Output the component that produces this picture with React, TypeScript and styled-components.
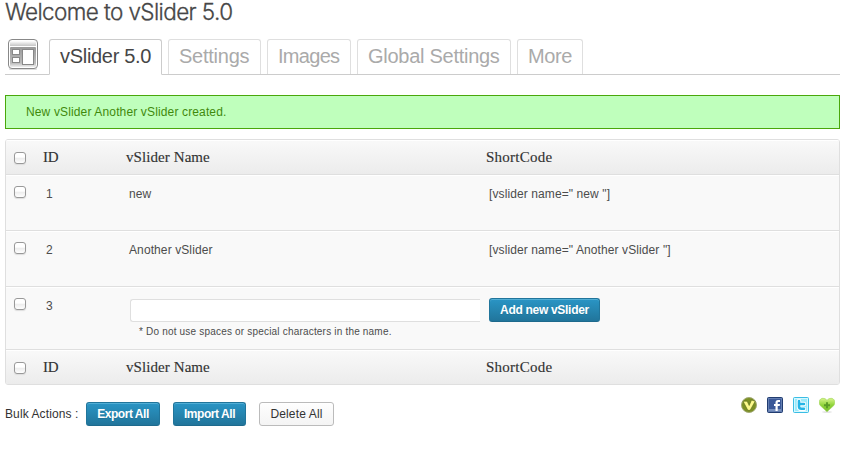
import React from "react";
import styled, { createGlobalStyle } from "styled-components";

const GlobalStyle = createGlobalStyle`
  * { box-sizing: border-box; }
  body {
    margin: 0;
    background: #fff;
    color: #333;
    font: 12px/16px "Liberation Sans", Arial, sans-serif;
  }
`;

const Page = styled.main`
  width: 835px;
  height: 450px;
  margin-left: 5px;
  overflow: hidden;
`;

const Title = styled.h1`
  margin: 0;
  height: 39px;
  font: 300 22.5px/23px Inter, "Liberation Sans", sans-serif;
  letter-spacing: -0.6px;
  color: #464646;
  -webkit-text-stroke: 0.3px #464646;
  white-space: nowrap;
`;

const TabBar = styled.nav`
  display: flex;
  height: 36px;
  border-bottom: 1px solid #ccc;
`;

const ScreenIcon = styled.svg`
  display: block;
  flex: none;
  width: 32px;
  height: 33px;
  margin: 0 10px 0 2px;
`;

const Tab = styled.a<{ $width: number; $active?: boolean; $spacing: number }>`
  flex: none;
  width: ${(p) => p.$width}px;
  height: ${(p) => (p.$active ? 36 : 35)}px;
  margin-right: 6px;
  padding-left: 10px;
  border: 1px solid ${(p) => (p.$active ? "#ccc" : "#dfdfdf")};
  border-bottom: ${(p) => (p.$active ? "1px solid #fff" : "0")};
  border-radius: 3px 3px 0 0;
  background: #fff;
  color: ${(p) => (p.$active ? "#464646" : "#aaa")};
  font-size: 20px;
  line-height: 33px;
  letter-spacing: ${(p) => p.$spacing}px;
  white-space: nowrap;
`;

const Notice = styled.div`
  height: 34px;
  margin: 20px 0 10px;
  padding-left: 20px;
  border: 1px solid #4aa70b;
  background: #bfffbc;
  color: #3f8a0c;
  line-height: 33px;
  letter-spacing: 0.14px;
`;

const Table = styled.section`
  height: 246px;
  border: 1px solid #dfdfdf;
  border-radius: 3px;
  background: #f9f9f9;
  overflow: hidden;
`;

const Columns = styled.div`
  display: grid;
  grid-template-columns: 37px 83px 360px 1fr;
`;

const HeadRow = styled(Columns)<{ $footer?: boolean }>`
  height: ${(p) => (p.$footer ? 34 : 35)}px;
  border-bottom: ${(p) => (p.$footer ? "0" : "1px solid #dfdfdf")};
  background: linear-gradient(#f9f9f9, #ececec);
  box-shadow: inset 0 1px #fff;
  color: #333;
  font: 15px/34px "Liberation Serif", Georgia, serif;
`;

const HeadLabel = styled.span<{ $spacing: number }>`
  letter-spacing: ${(p) => p.$spacing}px;
  -webkit-text-stroke: 0.15px #333;
`;

const Row = styled(Columns)<{ $height?: number }>`
  height: ${(p) => p.$height ?? 56}px;
  padding-top: 11px;
  border-bottom: 1px solid #dfdfdf;
  box-shadow: inset 0 1px #fff;
`;

const Cell = styled.div`
  padding-left: 3px;
  color: #4c4c4c;
  letter-spacing: 0.1px;
  white-space: nowrap;
`;

const Checkbox = styled.input<{ $head?: boolean }>`
  appearance: none;
  width: 12px;
  height: 12px;
  margin: ${(p) => (p.$head ? "12px" : "0")} 0 0 8px;
  border: 1px solid #999;
  border-radius: 3px;
  background: linear-gradient(#fff 40%, #eee 55%, #fff);
  box-shadow: 0 1px 1px #ddd;
`;

const NameInput = styled.input`
  display: block;
  width: 350px;
  height: 23px;
  margin: 1px 0 0 1px;
  border: 1px solid #dfdfdf;
  border-right: 0;
  border-radius: 3px 0 0 3px;
  background: #fff;
`;

const Hint = styled.small`
  display: block;
  margin: 1px 0 0 10px;
  color: #4c4c4c;
  font-size: 10px;
  line-height: 18px;
  letter-spacing: 0.19px;
`;

const Button = styled.button<{ $width: number; $plain?: boolean; $spacing: number }>`
  flex: none;
  width: ${(p) => p.$width}px;
  height: 24px;
  padding: 0;
  border: 1px solid ${(p) => (p.$plain ? "#bbb" : "#21759b")};
  border-bottom-color: ${(p) => (p.$plain ? "#bbb" : "#1e6a8d")};
  border-radius: 3px;
  background: ${(p) => (p.$plain ? "linear-gradient(#fefefe, #f4f4f4)" : "linear-gradient(#2a95c5, #21759b)")};
  box-shadow: inset 0 1px ${(p) => (p.$plain ? "#fff" : "rgba(120, 200, 230, .5)")};
  color: ${(p) => (p.$plain ? "#333" : "#fff")};
  font: ${(p) => (p.$plain ? 400 : 700)} 12px/22px "Liberation Sans", Arial, sans-serif;
  letter-spacing: ${(p) => p.$spacing}px;
  text-shadow: ${(p) => (p.$plain ? "none" : "0 1px rgba(0, 0, 0, .1)")};
  white-space: nowrap;
`;

const Footer = styled.footer`
  display: flex;
  justify-content: space-between;
  align-items: flex-start;
`;

const BulkActions = styled.div`
  display: flex;
  gap: 13px;
  margin-top: 17px;
`;

const BulkLabel = styled.span`
  width: 68px;
  line-height: 24px;
  letter-spacing: 0.1px;
  white-space: nowrap;
`;

const SocialLinks = styled.div`
  display: flex;
  gap: 10px;
  margin: 12px 5px 0 0;

  svg { display: block; width: 16px; height: 16px; }
`;

const TableHeading = ({ footer = false }: { footer?: boolean }) => (
  <HeadRow $footer={footer}>
    <Checkbox type="checkbox" $head />
    <HeadLabel $spacing={-0.2}>ID</HeadLabel>
    <HeadLabel $spacing={0.08}>vSlider Name</HeadLabel>
    <HeadLabel $spacing={0.25}>ShortCode</HeadLabel>
  </HeadRow>
);

const PanelIcon = () => (
  <ScreenIcon viewBox="0 0 32 33">
    <defs>
      <linearGradient id="panelTop" x2="0" y2="1">
        <stop stopColor="#fff" /><stop offset="1" stopColor="#c4c4c4" />
      </linearGradient>
      <linearGradient id="panelBody" x2="0" y2="1">
        <stop stopColor="#999" /><stop offset=".8" stopColor="#bbb" /><stop offset="1" stopColor="#eee" />
      </linearGradient>
    </defs>
    <rect x="2" y="29" width="28" height="2" rx="1" fill="#ddd" />
    <rect x="1.5" y=".5" width="29" height="29" rx="3.5" fill="#fff" stroke="#888" />
    <rect x="3" y="2" width="26" height="5" fill="url(#panelTop)" />
    <rect x="3" y="8" width="26" height="20" rx="1" fill="url(#panelBody)" />
    <rect x="5.5" y="10.5" width="7" height="5" fill="#fff" stroke="#888" />
    <rect x="5.5" y="18.5" width="7" height="5" fill="#fff" stroke="#888" />
    <rect x="15.5" y="10.5" width="11" height="15" fill="#fff" stroke="#888" />
  </ScreenIcon>
);

const VIcon = () => (
  <svg viewBox="0 0 16 16">
    <circle cx="8" cy="8" r="7.5" fill="#7c9024" stroke="#a3aa78" />
    <path d="M2 4.2h4.2L8.2 8.5L10.5 3l3.7 1.2L9.2 13.3H6.8z" fill="#fdfa8c" stroke="#55671a" strokeWidth=".6" />
  </svg>
);

const FacebookIcon = () => (
  <svg viewBox="0 0 16 16">
    <rect x=".5" y=".5" width="15" height="15" rx="1" fill="#3b5998" stroke="#223d70" />
    <rect x="1.5" y="1.5" width="13" height="13" fill="none" stroke="#647fb2" />
    <rect x="2" y="12" width="12" height="2" fill="#7891bf" />
    <path d="M8.5 14V9H7V7h1.5V5.5Q8.5 3 11 3h2v2h-1.5q-.8 0-.8.8V7H13l-.3 2h-2v5z" fill="#fff" />
  </svg>
);

const TwitterIcon = () => (
  <svg viewBox="0 0 16 16">
    <rect x=".5" y=".5" width="15" height="15" rx="1" fill="#9beafa" stroke="#3bbde4" />
    <rect x="1.5" y="1.5" width="13" height="13" fill="none" stroke="#d5f8ff" />
    <path d="M6 4v5.5Q6 12 8.5 12H11M6 7h5" fill="none" stroke="#fff" strokeWidth="4.4" strokeLinecap="round" />
    <path d="M6 4v5.5Q6 11.8 8.5 11.8H11M6 7h5" fill="none" stroke="#24b5e6" strokeWidth="2.6" strokeLinecap="round" />
  </svg>
);

const HeartIcon = () => (
  <svg viewBox="0 0 16 16">
    <defs>
      <linearGradient id="heartFill" x2="0" y2="1">
        <stop stopColor="#d7f58a" /><stop offset=".5" stopColor="#91d43b" /><stop offset="1" stopColor="#75bd2c" />
      </linearGradient>
    </defs>
    <ellipse cx="8" cy="15" rx="5" ry=".7" fill="#ddd" />
    <path d="M8 14.8L1.2 8.5C-1 5.5 .5 1.3 4 1.3Q7 1.3 8 3.5Q9 1.3 12 1.3C15.5 1.3 17 5.5 14.8 8.5z" fill="url(#heartFill)" stroke="#a5d961" strokeWidth=".7" />
    <path d="M8 5.2v6M5 8.2h6" stroke="#5b9c26" strokeWidth="2" />
  </svg>
);

export default function App() {
  return (
    <>
      <GlobalStyle />
      <Page>
        <Title>Welcome to vSlider 5.0</Title>
        <TabBar>
          <PanelIcon />
          <Tab $width={113} $active $spacing={-0.3}>vSlider 5.0</Tab>
          <Tab $width={93} $spacing={-0.25}>Settings</Tab>
          <Tab $width={84} $spacing={-0.7}>Images</Tab>
          <Tab $width={154} $spacing={-0.27}>Global Settings</Tab>
          <Tab $width={66} $spacing={-0.4}>More</Tab>
        </TabBar>
        <Notice>New vSlider Another vSlider created.</Notice>
        <Table>
          <TableHeading />
          <Row>
            <Checkbox type="checkbox" />
            <Cell>1</Cell>
            <Cell>new</Cell>
            <Cell>[vslider name=" new "]</Cell>
          </Row>
          <Row>
            <Checkbox type="checkbox" />
            <Cell>2</Cell>
            <Cell>Another vSlider</Cell>
            <Cell>[vslider name=" Another vSlider "]</Cell>
          </Row>
          <Row $height={63}>
            <Checkbox type="checkbox" />
            <Cell>3</Cell>
            <Cell>
              <NameInput />
              <Hint>* Do not use spaces or special characters in the name.</Hint>
            </Cell>
            <Cell><Button $width={111} $spacing={-0.3}>Add new vSlider</Button></Cell>
          </Row>
          <TableHeading footer />
        </Table>
        <Footer>
          <BulkActions>
            <BulkLabel>Bulk Actions :</BulkLabel>
            <Button $width={74} $spacing={-0.45}>Export All</Button>
            <Button $width={73} $spacing={-0.45}>Import All</Button>
            <Button $width={75} $plain $spacing={0.15}>Delete All</Button>
          </BulkActions>
          <SocialLinks>
            <VIcon />
            <FacebookIcon />
            <TwitterIcon />
            <HeartIcon />
          </SocialLinks>
        </Footer>
      </Page>
    </>
  );
}
